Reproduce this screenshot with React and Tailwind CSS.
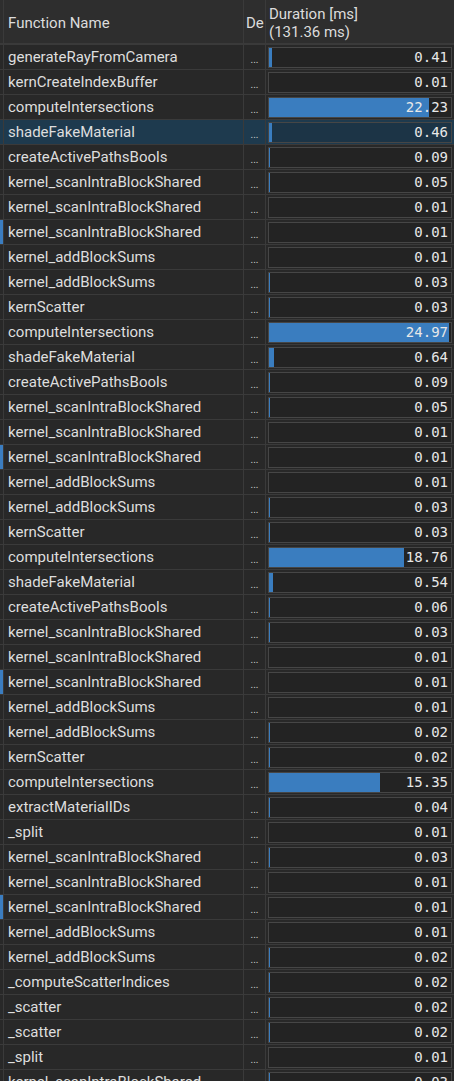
import React from 'react';

const rows = [
    ['generateRayFromCamera', 0.41],
    ['kernCreateIndexBuffer', 0.01],
    ['computeIntersections', 22.23],
    ['shadeFakeMaterial', 0.46, 'selected'],
    ['createActivePathsBools', 0.09],
    ['kernel_scanIntraBlockShared', 0.05],
    ['kernel_scanIntraBlockShared', 0.01],
    ['kernel_scanIntraBlockShared', 0.01, 'mark'],
    ['kernel_addBlockSums', 0.01],
    ['kernel_addBlockSums', 0.03],
    ['kernScatter', 0.03],
    ['computeIntersections', 24.97],
    ['shadeFakeMaterial', 0.64],
    ['createActivePathsBools', 0.09],
    ['kernel_scanIntraBlockShared', 0.05],
    ['kernel_scanIntraBlockShared', 0.01],
    ['kernel_scanIntraBlockShared', 0.01, 'mark'],
    ['kernel_addBlockSums', 0.01],
    ['kernel_addBlockSums', 0.03],
    ['kernScatter', 0.03],
    ['computeIntersections', 18.76],
    ['shadeFakeMaterial', 0.54],
    ['createActivePathsBools', 0.06],
    ['kernel_scanIntraBlockShared', 0.03],
    ['kernel_scanIntraBlockShared', 0.01],
    ['kernel_scanIntraBlockShared', 0.01, 'mark'],
    ['kernel_addBlockSums', 0.01],
    ['kernel_addBlockSums', 0.02],
    ['kernScatter', 0.02],
    ['computeIntersections', 15.35],
    ['extractMaterialIDs', 0.04],
    ['_split', 0.01],
    ['kernel_scanIntraBlockShared', 0.03],
    ['kernel_scanIntraBlockShared', 0.01],
    ['kernel_scanIntraBlockShared', 0.01, 'mark'],
    ['kernel_addBlockSums', 0.01],
    ['kernel_addBlockSums', 0.02],
    ['_computeScatterIndices', 0.02],
    ['_scatter', 0.02],
    ['_scatter', 0.02],
    ['_split', 0.01],
    ['kernel_scanIntraBlockShared', 0.03],
];

const MAX = 24.97;
const BAR_W = 180;

const Row = ({ name, ms, flag }) => {
    const selected = flag === 'selected';
    const cellBg = selected ? 'bg-[#1e3a4e]' : 'bg-[#282828]';
    return (
        <div className="grid grid-cols-[3px_239px_21px_1fr] gap-x-px h-[24px] mb-px">
            <div className={flag === 'mark' ? 'bg-[#3b7dc0]' : cellBg}></div>
            <div className={`${cellBg} flex items-center pl-[4px] text-[15px] text-[#dedede] whitespace-nowrap overflow-hidden`}>
                {name}
            </div>
            <div className={`${cellBg} flex items-center justify-center text-[10px] text-[#cfcfcf] pt-[4px]`}>...</div>
            <div className={`${cellBg} flex items-center pl-[2px] pr-[2px]`}>
                <div className={`relative w-full h-[21px] border border-[#464646] ${selected ? 'bg-[#1c3446]' : 'bg-[#232323]'}`}>
                    <div className="absolute left-0 top-0 bottom-0 bg-[#3a7dbf]" style={{ width: `${(ms / MAX) * BAR_W}px` }}></div>
                    <div className="relative h-full flex items-center justify-end pr-[3px] font-['DejaVu_Sans_Mono',monospace] text-[14px] text-[#e8e8e8]">
                        {ms.toFixed(2)}
                    </div>
                </div>
            </div>
        </div>
    );
};

const App = () => {
    return (
        <div className="w-[454px] h-[1081px] overflow-hidden bg-[#3a3a3a] font-['Roboto',sans-serif]">
            {/* header */}
            <div className="grid grid-cols-[3px_239px_21px_1fr] gap-x-px h-[43px] mb-[2px]">
                <div className="bg-[#2e2e2e]"></div>
                <div className="bg-[#2e2e2e] flex items-center pl-[4px] pt-[3px] text-[15px] text-[#dcdcdc]">Function Name</div>
                <div className="bg-[#2e2e2e] flex items-center pl-[2px] pt-[3px] text-[15px] text-[#dcdcdc] overflow-hidden whitespace-nowrap">De</div>
                <div className="bg-[#2e2e2e] flex flex-col justify-center pl-[3px] pt-[2px] text-[15px] leading-[18px] text-[#dcdcdc]">
                    <span>Duration [ms]</span>
                    <span>(131.36 ms)</span>
                </div>
            </div>
            {rows.map(([name, ms, flag], i) => (
                <Row key={i} name={name} ms={ms} flag={flag} />
            ))}
        </div>
    );
};

export default App;
